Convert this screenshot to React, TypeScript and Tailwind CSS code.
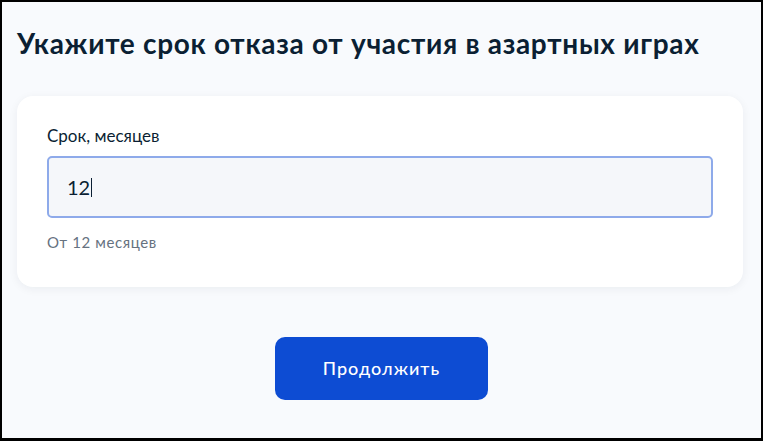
export default function App() {
  return (
    <div className="h-[441px] w-[763px] bg-black pt-[2px] pr-[2px] pb-[3px] pl-[2px]">
      <div
        className="flex h-full w-full flex-col bg-[#f8fafd] pl-[15px] pr-[18px] text-[#0b1f33]"
        style={{ fontFamily: "Lato, 'Noto Sans', sans-serif" }}
      >
        <h1 className="mt-[23px] text-[28px] font-bold leading-[36px] tracking-[0.7px]">
          Укажите срок отказа от участия в азартных играх
        </h1>

        {/* Карточка с полем ввода */}
        <div className="mt-[35px] rounded-2xl bg-white px-[30px] pt-[29px] pb-[35px] shadow-[0_2px_10px_rgba(11,31,51,0.06)]">
          <label className="block text-[17px] leading-[22px]">Срок, месяцев</label>
          <div className="mt-[9px] flex h-[62px] items-center rounded-[5px] border-2 border-[#8eaaea] bg-[#f5f7fa] pl-[18px]">
            <span className="text-[20px] leading-6">12</span>
            <span className="ml-[1px] h-[19px] w-[1px] bg-[#0b1f33]" />
          </div>
          <p className="mt-[14px] text-[15px] leading-5 tracking-[0.6px] text-[#66727f]">От 12 месяцев</p>
        </div>

        <div className="mt-[50px] flex justify-center pl-[3px]">
          <button className="h-[63px] w-[213px] rounded-[10px] bg-[#0d4cd3] text-[18px] font-medium tracking-[1px] text-white">
            Продолжить
          </button>
        </div>
      </div>
    </div>
  );
}
